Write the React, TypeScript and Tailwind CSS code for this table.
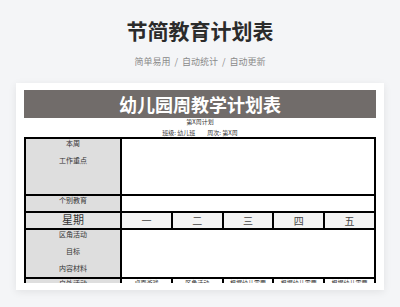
import React from "react";

const font = { fontFamily: '"Noto Sans CJK SC", "Noto Sans", sans-serif' };

export default function App() {
  const days = ["一", "二", "三", "四", "五"];
  const last = ["桌面游戏", "区角活动", "根据幼儿需要", "根据幼儿需要", "根据幼儿需要"];
  return (
    <div
      className="w-[400px] h-[307px] bg-[#f4f5f7] overflow-hidden flex flex-col items-center"
      style={font}
    >
      <div className="pt-[19px] text-[21px] leading-[22px] font-bold text-[#2b2b2b]">节简教育计划表</div>
      <div className="mt-[15px] text-[9px] leading-[12px] text-[#8a8a8a] flex gap-[4px]">
        <span>简单易用</span>
        <span>/</span>
        <span>自动统计</span>
        <span>/</span>
        <span>自动更新</span>
      </div>
      <div className="mt-[15px] w-[368px] h-[207px] bg-white shadow-[0_2px_8px_rgba(0,0,0,0.08)] px-[8px] pt-[7px] pb-[7px] flex flex-col">
        <div className="h-[28px] bg-[#716c6a] flex items-center justify-center text-white text-[18px] font-bold leading-[28px]">
          幼儿园周教学计划表
        </div>
        <div className="h-[8px] text-[6px] leading-[8px] text-[#333] text-center">第X周计划</div>
        <div className="mt-[3px] h-[8px] text-[6px] leading-[8px] text-[#333] flex justify-center gap-[12px]">
          <span>班级: 幼儿班</span>
          <span>周次: 第X周</span>
        </div>
        <div className="flex-1 overflow-hidden">
          <div className="grid grid-cols-[94px_repeat(5,1fr)] grid-rows-[55px_15px_15px_47px_20px] gap-[2px] bg-black border-2 border-black text-[#333]">
            <div className="bg-[#dedede] flex flex-col items-center text-[7px] leading-[8px] gap-[9px]">
              <span>本周</span>
              <span>工作重点</span>
            </div>
            <div className="col-span-5 bg-white"></div>

            <div className="bg-[#dedede] flex flex-col items-center text-[7px] leading-[8px]">
              <span>个别教育</span>
            </div>
            <div className="col-span-5 bg-white"></div>

            <div className="bg-[#e3e3e3] flex justify-center text-[11px] leading-[12px]">星期</div>
            {days.map((d) => (
              <div key={d} className="bg-[#f3f3f3] flex items-center justify-center text-[10px] leading-[12px] text-[#444]">
                {d}
              </div>
            ))}

            <div className="bg-[#dedede] flex flex-col items-center text-[7px] leading-[8px] gap-[9px]">
              <span>区角活动</span>
              <span>目标</span>
              <span>内容材料</span>
            </div>
            <div className="col-span-5 bg-white"></div>

            <div className="bg-[#dedede] flex flex-col items-center text-[7px] leading-[8px]">
              <span>户外活动</span>
            </div>
            {last.map((t, i) => (
              <div key={i} className="bg-white flex justify-center text-[6px] leading-[8px]">
                {t}
              </div>
            ))}
          </div>
        </div>
      </div>
    </div>
  );
}
